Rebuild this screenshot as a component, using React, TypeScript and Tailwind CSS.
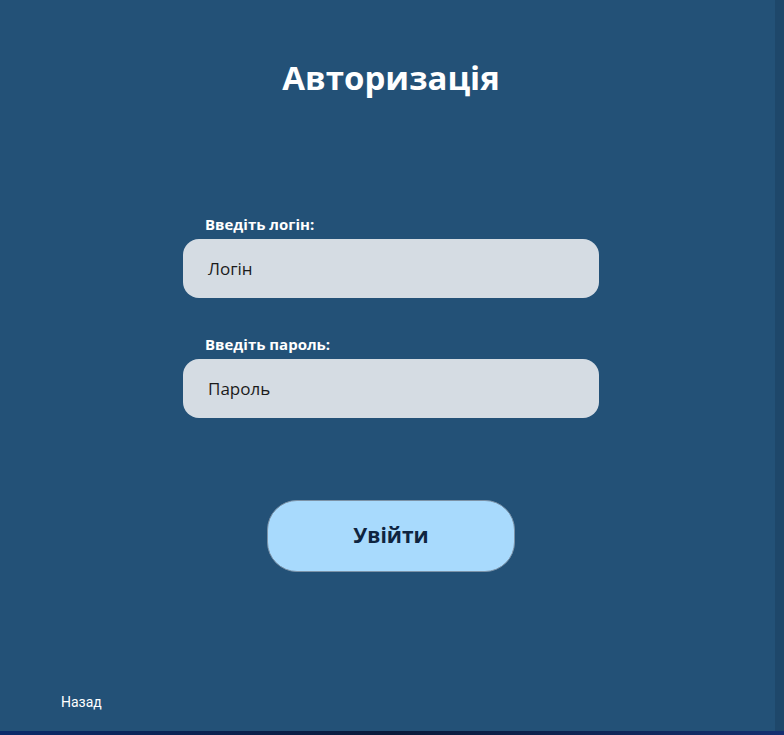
export default function App() {
  return (
    <div className="w-[784px] h-[735px] flex flex-col bg-[#0b1a3a] overflow-hidden" style={{ fontFamily: '"Open Sans", "Noto Sans", sans-serif' }}>
      <div className="flex h-[731px]">
        <div className="w-[775px] h-full bg-[#235177] flex flex-col pl-[7px]">
          <h1 className="mt-[55px] text-center text-[33px] leading-[46px] font-bold text-white">Авторизація</h1>

          <div className="mt-[113px] mx-auto w-[416px] flex flex-col">
            <label className="pl-[22px] text-[15px] leading-[20px] font-bold text-white">Введіть логін:</label>
            <div className="mt-[5px] h-[59px] rounded-[16px] bg-[#d5dce3] flex items-center px-[25px] text-[17px] text-[#1b1b1b]">
              Логін
            </div>

            <label className="mt-[36px] pl-[22px] text-[15px] leading-[20px] font-bold text-white">Введіть пароль:</label>
            <div className="mt-[5px] h-[59px] rounded-[16px] bg-[#d5dce3] flex items-center px-[25px] text-[17px] text-[#1b1b1b]">
              Пароль
            </div>
          </div>

          <button className="mt-[82px] mx-auto w-[248px] h-[72px] rounded-[30px] bg-[#a8dafd] border border-[#7c93a8] text-[21px] font-bold text-[#0f2440]">
            Увійти
          </button>

          <div className="mt-auto mb-[20px] pl-[54px] text-[14px] leading-[18px] text-white" style={{ fontFamily: '"Liberation Sans Narrow", "Roboto", sans-serif' }}>
            Назад
          </div>
        </div>
        <div className="flex-1 bg-[#1e476a]" />
      </div>
      <div className="flex-1 bg-gradient-to-r from-[#0b2a6a] via-[#0a1a3a] to-[#142f70]" />
    </div>
  );
}
